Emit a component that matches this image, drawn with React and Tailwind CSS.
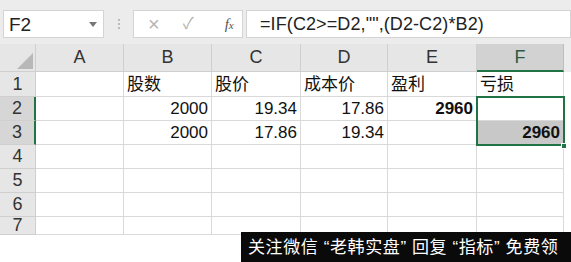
const cols = ['A', 'B', 'C', 'D', 'E', 'F']

const rows = [
  { n: 1, h: 'h-[25px]', cells: ['', '股数', '股价', '成本价', '盈利', '亏损'] },
  { n: 2, h: 'h-[24px]', cells: ['', '2000', '19.34', '17.86', '2960', ''] },
  { n: 3, h: 'h-[24px]', cells: ['', '2000', '17.86', '19.34', '', '2960'] },
  { n: 4, h: 'h-[24px]', cells: ['', '', '', '', '', ''] },
  { n: 5, h: 'h-[24px]', cells: ['', '', '', '', '', ''] },
  { n: 6, h: 'h-[24px]', cells: ['', '', '', '', '', ''] },
  { n: 7, h: 'h-[18px]', cells: ['', '', '', '', '', ''] },
]

const colW = ['w-[88px]', 'w-[88px]', 'w-[89px]', 'w-[87px]', 'w-[89px]', 'w-[87px]']

function Cell({ r, c, v }) {
  const isNum = /^[0-9.]+$/.test(v)
  const bold = v === '2960'
  const shaded = r === 3 && c === 5
  return (
    <div
      className={`${colW[c]} shrink-0 border-r border-b border-[#d9d9d9] flex items-center overflow-hidden whitespace-nowrap px-[3px] ${
        isNum ? 'justify-end' : 'justify-start'
      } ${shaded ? 'bg-[#c8c8c8]' : 'bg-white'} ${bold ? 'font-bold' : ''}`}
    >
      <span className="leading-none text-[17px] text-[#111]">{v}</span>
    </div>
  )
}

export default function App() {
  return (
    <div
      className="relative w-[571px] h-[262px] overflow-hidden bg-white"
      style={{ fontFamily: '"Liberation Sans", "Noto Sans CJK SC", sans-serif' }}
    >
      {/* Formula bar */}
      <div className="h-[44px] bg-[#ececec] flex items-start pt-[10px] pl-[3px]">
        <div className="w-[101px] h-[28px] bg-white border border-[#d4d4d4] flex items-center justify-between pl-[5px] pr-[5px]">
          <span className="text-[19px] text-[#222] leading-none">F2</span>
          <span className="w-0 h-0 border-l-[4px] border-r-[4px] border-t-[5px] border-l-transparent border-r-transparent border-t-[#777] mr-[1px]" />
        </div>
        <div className="w-[29px] h-[28px] flex flex-col items-center justify-center gap-[2px]">
          <span className="w-[2px] h-[2px] bg-[#bbb]" />
          <span className="w-[2px] h-[2px] bg-[#bbb]" />
          <span className="w-[2px] h-[2px] bg-[#bbb]" />
        </div>
        <div className="w-[110px] h-[28px] bg-white border border-[#d4d4d4] flex items-center pl-[14px] gap-[23px]">
          <span className="text-[#b4b4b4] text-[20px] leading-none">×</span>
          <span className="text-[#b4b4b4] text-[16px] leading-none">✓</span>
          <span className="text-[#555] text-[15px] leading-none italic ml-[8px]" style={{ fontFamily: '"Liberation Serif", serif' }}>
            f<span className="text-[11px]">x</span>
          </span>
        </div>
        <div className="ml-[3px] flex-1 h-[28px] bg-white border border-[#d4d4d4] flex items-center pl-[13px]">
          <span className="text-[18px] text-[#222] leading-none tracking-[0.1px]">=IF(C2&gt;=D2,"",(D2-C2)*B2)</span>
        </div>
      </div>

      {/* Column headers */}
      <div className="flex h-[28px] bg-[#ececec]">
        <div className="w-[36px] shrink-0 bg-[#e6e6e6] border-r border-b border-[#cfcfcf] flex items-end justify-end p-[2px]">
          <span className="w-0 h-0 border-b-[16px] border-l-[16px] border-l-transparent border-b-[#b8b8b8]" />
        </div>
        {cols.map((c, i) => (
          <div
            key={c}
            className={`${colW[i]} shrink-0 flex items-center justify-center border-r text-[18px] ${
              c === 'F'
                ? 'bg-[#d2d2d2] border-b-2 border-b-[#217346] border-r-[#bdbdbd] text-[#2b5a40]'
                : 'bg-[#e6e6e6] border-b border-[#cfcfcf] text-[#333]'
            }`}
          >
            {c}
          </div>
        ))}
      </div>

      {/* Rows */}
      {rows.map((row) => (
        <div key={row.n} className={`flex ${row.h}`}>
          <div
            className={`w-[36px] shrink-0 border-b border-[#cfcfcf] flex items-center justify-center text-[18px] text-[#333] ${
              row.n === 2 || row.n === 3
                ? 'bg-[#d6d6d6] border-r-2 border-r-[#217346]'
                : 'bg-[#e6e6e6] border-r border-r-[#cfcfcf]'
            }`}
          >
            {row.n}
          </div>
          {row.cells.map((v, i) => (
            <Cell key={i} r={row.n} c={i} v={v} />
          ))}
        </div>
      ))}

      {/* Selection F2:F3 */}
      <div className="absolute left-[476px] top-[96px] w-[89px] h-[50px] border-2 border-[#217346] pointer-events-none" />
      <div className="absolute left-[561px] top-[143px] w-[6px] h-[6px] bg-[#217346] border border-white" />

      {/* Watermark banner */}
      <div className="absolute left-[241px] top-[232px] w-[330px] h-[30px] bg-[#0a0a0a] flex items-center pl-[7px]">
        <span className="text-white text-[17px] leading-none whitespace-nowrap tracking-[0.6px]">
          关注微信 “老韩实盘” 回复 “指标” 免费领
        </span>
      </div>
    </div>
  )
}
